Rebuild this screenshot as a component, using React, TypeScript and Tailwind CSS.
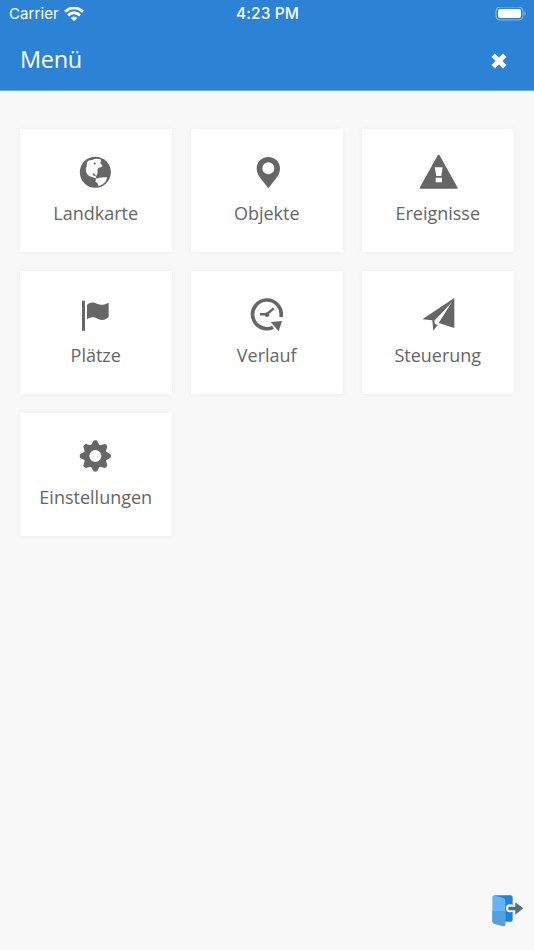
import type { ReactNode } from "react";

type MenuItem = {
  label: string;
  icon: ReactNode;
};

const menuItems: MenuItem[] = [
  {
    label: "Landkarte",
    icon: (
      <>
        <circle cx="58" cy="61" r="46.5" />
        <path
          fill="#fff"
          d="M33 31 Q38 23 48 24 Q60 18 73 22 L76 29 L72 32 L80 42 L75 46 L68 47 Q63 52 65 61 Q64 69 60 72 L54 64 L49 65 L53 71 L59 73 L62 80 L50 76 Q35 71 31 62 Q27 53 32 42 Z"
        />
        <path fill="#fff" d="M60 80 Q74 74 93 76 Q92 89 80 97 L67 103 L65 94 L58 89 Z" />
        <path d="M54 31 L60 34 L57 38 L53 36 Z" />
      </>
    ),
  },
  {
    label: "Objekte",
    icon: (
      <path
        fillRule="evenodd"
        d="M64 15 C44 15 29 30 29 50 C29 63 36 73 44 83 L64 109 L84 83 C92 73 99 63 99 50 C99 30 84 15 64 15 Z M64 31 a18 18 0 1 1 0 36 a18 18 0 1 1 0 -36 Z"
      />
    ),
  },
  {
    label: "Ereignisse",
    icon: (
      <>
        <path d="M62 8 Q64 8 66 12 L119 107 Q120 110 117 110 H7 Q4 110 5 107 L58 12 Q60 8 62 8 Z" />
        <path fill="#fff" d="M50 46 H74 L70 72 H55 Z M53 77 H72 V91 H53 Z" />
      </>
    ),
  },
  {
    label: "Plätze",
    icon: (
      <path d="M18 20 H27 V110 H18 Z M33 33 C43 22 55 25 65 30 C77 35 87 31 98 26 V69 C87 79 77 80 65 74 C53 68 43 68 33 76 Z" />
    ),
  },
  {
    label: "Verlauf",
    icon: (
      <>
        <path
          d="M102 69 A43 43 0 1 0 78 100"
          fill="none"
          stroke="currentColor"
          strokeWidth="11"
        />
        <path d="M71 84 L105 81 L95 112 Z" />
        <path
          d="M39 61 H59 L80 43"
          fill="none"
          stroke="currentColor"
          strokeWidth="7.500"
          strokeLinejoin="round"
        />
        <circle cx="60" cy="62" r="7" />
      </>
    ),
  },
  {
    label: "Steuerung",
    icon: (
      <path d="M109 12 L13 76 L43 79 L46 110 L59 93 L51 90 L49 80 L102 24 L62 87 L109 102 Z" />
    ),
  },
  {
    label: "Einstellungen",
    icon: (
      <>
        <circle cx="58" cy="60" r="26.5" fill="none" stroke="currentColor" strokeWidth="17" />
        {[0, 45, 90, 135, 180, 225, 270, 315].map((angle) => (
          <path
            key={angle}
            d="M44 31 L51 17 Q52 13 58 13 Q64 13 65 17 L72 31 Z"
            transform={`rotate(${angle} 58 60)`}
          />
        ))}
      </>
    ),
  },
];

function StatusBar() {
  return (
    <div className="grid h-7 grid-cols-3 items-center pr-2 pl-[9px] font-[Inter,sans-serif] text-[15px] leading-7">
      <div className="flex items-center gap-[5px]">
        <span className="tracking-[0.1px]">Carrier</span>
        <svg width="20" height="15" viewBox="0 0 60 45" fill="none" stroke="#fff" strokeWidth="8.500">
          <path d="M3 14 Q30 -9 57 14" />
          <path d="M12 25 Q30 9 48 25" />
          <path d="M20 33 Q30 24 40 33 L30 42 Z" fill="#fff" stroke="none" />
        </svg>
      </div>
      <span className="text-center text-[15.500px] font-medium tracking-[0.1px]">4:23 PM</span>
      <svg className="justify-self-end" width="31" height="15" viewBox="0 0 31 15">
        <rect x="1" y="0" width="27" height="13" rx="4" fill="none" stroke="#fff" strokeOpacity=".45" />
        <rect x="3" y="2" width="23" height="9" rx="2" fill="#fff" />
        <path d="M29.500 4 Q31.500 6.500 29.500 9 Z" fill="#fff" fillOpacity=".5" />
      </svg>
    </div>
  );
}

function MenuCard({ label, icon }: MenuItem) {
  return (
    <button
      type="button"
      className="flex h-[123px] flex-col items-center bg-white pt-[23px] text-[#666] shadow-[0_0_5px_rgba(0,0,0,0.06)]"
    >
      <svg width="40" height="40" viewBox="0 0 120 120" fill="currentColor">
        {icon}
      </svg>
      <span className="mt-[7px] mr-[0.500px] text-[18px] leading-7">{label}</span>
    </button>
  );
}

function LogoutIcon() {
  return (
    <svg width="34" height="34" viewBox="0 0 102 102">
      <path d="M16 7 H65 Q71 7 71 14 V80 Q71 86 65 86 H40 Z" fill="#1e83e0" />
      <path d="M10 12 Q10 6 17 7 L43 15 Q49 17 49 23 V94 Q49 101 42 99 L15 92 Q10 91 10 85 Z" fill="#64b5f6" />
      <path d="M10 54 H49 V94 Q49 101 42 99 L15 92 Q10 91 10 85 Z" fill="#559fda" />
      <circle cx="63" cy="46" r="12" fill="#f8f8f8" />
      <path d="M60 41 H79 V28 L103 46 L79 65 V52 H60 Q55 46 60 41 Z" fill="#546e7a" />
    </svg>
  );
}

export default function App() {
  return (
    <div className="flex h-[950px] w-[534px] flex-col overflow-hidden bg-[#f8f8f8] font-['Open_Sans',sans-serif]">
      <header className="h-[91px] border-b border-[#70a9e1] bg-[#2c82d5] text-white">
        <StatusBar />
        <div className="flex h-[62px] items-center justify-between pr-[27px] pl-5">
          <h1 className="text-[23.500px] leading-8 tracking-[-0.3px]">Menü</h1>
          <button type="button" aria-label="Schließen" className="mt-[3px]">
            <svg width="16" height="16" viewBox="0 0 16 16" fill="none" stroke="#fff" strokeWidth="4.800">
              <path d="M2.200 2.200 L13.800 13.800 M13.800 2.200 L2.200 13.800" />
            </svg>
          </button>
        </div>
      </header>
      <main className="grid grid-cols-3 gap-[19px] px-5 pt-[38px]">
        {menuItems.map((item) => (
          <MenuCard key={item.label} {...item} />
        ))}
      </main>
      <footer className="mt-auto flex justify-end pr-[11px] pb-[23px]">
        <button type="button" aria-label="Abmelden">
          <LogoutIcon />
        </button>
      </footer>
    </div>
  );
}
